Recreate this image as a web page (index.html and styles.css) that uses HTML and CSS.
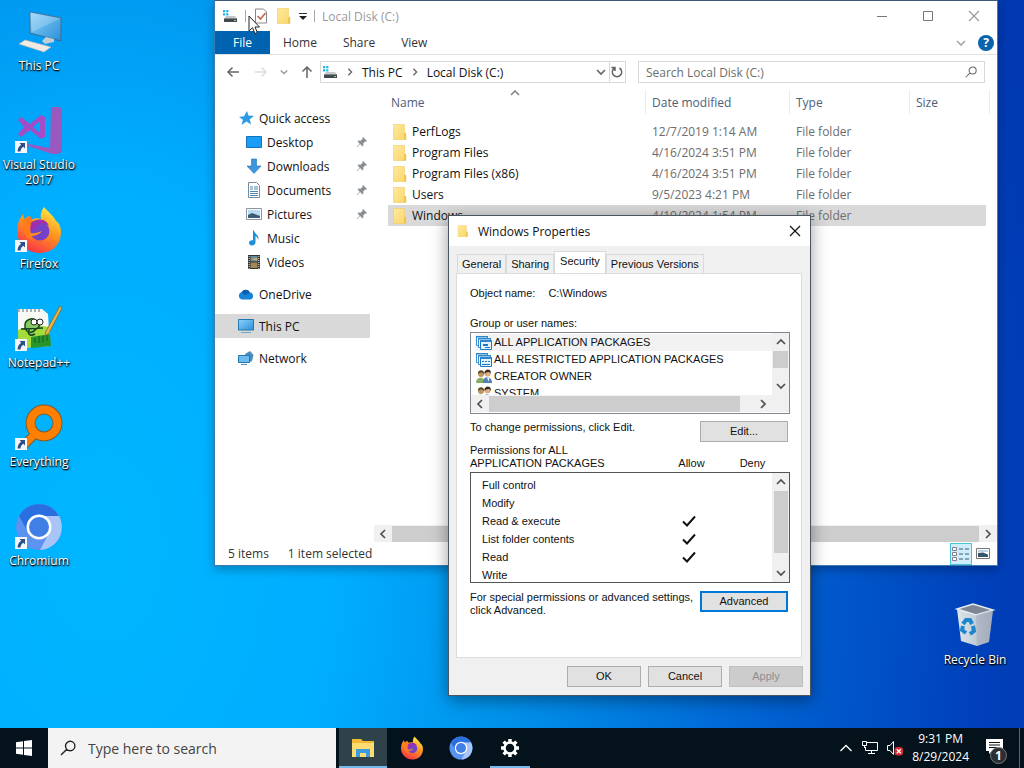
FILE: index.html
```html
<!DOCTYPE html>
<html lang="en">
<head>
  <meta charset="UTF-8">
  <title>Desktop</title>
  <meta name="viewport" content="width=device-width, initial-scale=1.0">
  <link rel="stylesheet" href="styles.css">
</head>
<body>

<!-- Shared icons -->
<svg class="defs" aria-hidden="true">
  <defs>
    <linearGradient id="gScreen" x1="0" y1="0" x2="1" y2="1"><stop offset="0" stop-color="#8fd3fb"/><stop offset="1" stop-color="#2a8fd8"/></linearGradient>
    <linearGradient id="gFox" x1="0.8" y1="0" x2="0.3" y2="1"><stop offset="0" stop-color="#fff04a"/><stop offset="0.45" stop-color="#ff9a1c"/><stop offset="1" stop-color="#f8304a"/></linearGradient>
    <linearGradient id="gFolder" x1="0" y1="0" x2="1" y2="1"><stop offset="0" stop-color="#ffe9a0"/><stop offset="1" stop-color="#fbd667"/></linearGradient>
    <linearGradient id="gBin" x1="0" y1="0" x2="1" y2="0"><stop offset="0" stop-color="#dfe6ec"/><stop offset="1" stop-color="#a9b2c0"/></linearGradient>
  </defs>
  <symbol id="folder" viewBox="0 0 16 16">
    <path d="M1.500.5h11v8l1.500 1V15.500H1.500z" fill="url(#gFolder)" stroke="#eecb62" stroke-width="0.6"/>
    <path d="M12 9h2v6.500h-2z" fill="#efc652"/>
  </symbol>
  <symbol id="drive" viewBox="0 0 16 16">
    <path d="M1 2h2.200v2.200H1zM4.200 2h2.200v2.200H4.200zM1 5.200h2.200v2.200H1zM4.200 5.200h2.200v2.200H4.200z" fill="#22b5e6"/>
    <path d="M4 8h9l2 3H2z" fill="#c4c8cb"/><path d="M2 10.500h13V14H2z" fill="#43484c"/><path d="M12 12h2v1h-2z" fill="#7fe37f"/>
  </symbol>
  <symbol id="shortcut" viewBox="0 0 12 12">
    <path d="M0 0h12v12H0z" fill="#f5f7fa"/>
    <path d="M4.500 2H10v5.500L8.300 5.800C6.500 7 5.600 8.400 5.500 10.500H2.600C2.500 7.500 4 5.500 6.200 3.800z" fill="#2d4f8c"/>
  </symbol>
  <symbol id="pin" viewBox="0 0 12 12">
    <path d="M7 1l4 4-1 .8-.8-.2-2 2 .2 2-1 .8-2.300-2.300L1 11.300l-.4-.4 3-3.200L1.600 5.500l1-1 2 .2 2-2L6.300 1.800z" fill="#8a8f94"/>
  </symbol>
  <symbol id="monitor" viewBox="0 0 16 16">
    <path d="M.5 1.500h15v10.500H.5z" fill="url(#gScreen)" stroke="#2577ad"/><path d="M3 14.500h10" stroke="#6fa6c8"/>
  </symbol>
  <symbol id="firefox" viewBox="0 0 48 48">
    <path d="M29 1c3 4 9 8 12 14 5 3 6 11 4 18-3 9-11 14-20 14C12 47 2 37 2 25c0-5 1-9 4-14l2-3 1 5 5-3 2 4c4-2 7-2 10-1C25 9 26 5 29 1z" fill="url(#gFox)"/>
    <path d="M8 14l7-4 3 5 9 1-4 6-6 1c-2 4-1 9 2 12-7-2-11-8-11-14z" fill="#ff7a1a"/>
    <circle cx="25" cy="25" r="9.500" fill="#7442c9"/>
    <path d="M16 17c5-5 15-5 18 3-4-3-8-3-11-1l-2 4-6 1z" fill="#a02fae"/>
    <path d="M15 27c6 1 8-1 12-2-3 4-7 5-11 5z" fill="#ff911e"/>
  </symbol>
  <symbol id="chromium" viewBox="0 0 48 48">
    <circle cx="24" cy="24" r="23" fill="#5c93f0"/>
    <path d="M4 13A23 23 0 0 1 44 13H24L13 29z" fill="#2a6fe0"/>
    <path d="M24 13h20A23 23 0 0 1 25 47l9-17z" fill="#a9c5f8"/>
    <circle cx="24" cy="24" r="12.500" fill="#fff"/><circle cx="24" cy="24" r="10" fill="#3f7fe6"/>
  </symbol>
  <symbol id="people" viewBox="0 0 16 16">
    <circle cx="5" cy="5" r="3" fill="#b99660"/><path d="M2 5c-1-5 7-5 6 0-1-2-4-2-6 0z" fill="#5d4a25"/>
    <path d="M0 14c0-7 9-7 9 0z" fill="#86ad63"/>
    <circle cx="11.500" cy="4.500" r="3" fill="#ddae82"/><path d="M8.500 5c-1-6 8-6 6 0-1-3-4-2-6 0z" fill="#3e2a1d"/>
    <path d="M7 14c0-8 9-7 9 0z" fill="#4f7fb5"/><path d="M11 8.500l1.500 4 1-4z" fill="#fff"/>
  </symbol>
  <symbol id="package" viewBox="0 0 18 16">
    <path d="M1.500 1.500h11v9h-11z" fill="#fff" stroke="#3b8fce"/><path d="M3.500 3.500h12v9h-12z" fill="#fff" stroke="#3b8fce"/>
    <path d="M5.500 5.500h11v9h-11z" fill="#e3f1fb" stroke="#1979c4"/><path d="M1 1h12v1.500H1zM3 3h13v1.500H3zM5 5h12v2H5z" fill="#2c86cc"/>
  </symbol>
  <symbol id="tick" viewBox="0 0 14 12"><path d="M1 6.500l4 4L13 1.500" fill="none" stroke="#111" stroke-width="2"/></symbol>
  <symbol id="up" viewBox="0 0 10 10"><path d="M1 7l4-4 4 4" fill="none" stroke="currentColor" stroke-width="1.700"/></symbol>
  <symbol id="down" viewBox="0 0 10 10"><path d="M1 3l4 4 4-4" fill="none" stroke="currentColor" stroke-width="1.700"/></symbol>
  <symbol id="left" viewBox="0 0 10 10"><path d="M7 1L3 5l4 4" fill="none" stroke="currentColor" stroke-width="1.700"/></symbol>
  <symbol id="right" viewBox="0 0 10 10"><path d="M3 1l4 4-4 4" fill="none" stroke="currentColor" stroke-width="1.700"/></symbol>
  <symbol id="close" viewBox="0 0 12 12"><path d="M1 1l10 10M11 1L1 11" fill="none" stroke="currentColor" stroke-width="1.200"/></symbol>
  <symbol id="lens" viewBox="0 0 16 16"><path d="M6.800 9.200L1 15M5.500 6a4.700 4.700 0 1 1 9.400 0a4.700 4.700 0 1 1-9.400 0z" fill="none" stroke="currentColor" stroke-width="1.400"/></symbol>
</svg>

<main class="desktop">

  <div class="shortcuts">
    <a class="shortcut" href="#">
      <svg class="big" viewBox="0 0 48 48">
        <path d="M15 4l31 6v23L15 25z" fill="url(#gScreen)" stroke="#3d6c90"/>
        <path d="M15 4l31 6-29 14z" fill="#fff" opacity=".2"/>
        <path d="M31 29l8 2v3l-9 2-3-3z" fill="#c4ccd4"/>
        <path d="M4 36l6-4 26 7-7 5z" fill="#f0e9e4" stroke="#b9b6b2" stroke-width=".6"/>
      </svg>
      <span>This PC</span>
    </a>
    <a class="shortcut" href="#">
      <svg class="big" viewBox="0 0 48 48">
        <path d="M36 0h7q4 0 4 4v38q0 4-4 5h-6L13 39v-2l22 4z" fill="#9a59bf"/>
        <path d="M3 13l3-3 9 7L26 8l4 2v20l-4 2-11-9-9 7-3-3 6-7zM25 14l-7 6 7 6z" fill="#a44cc6" fill-rule="evenodd"/>
      </svg>
      <svg class="arrow"><use href="#shortcut"/></svg>
      <span>Visual Studio 2017</span>
    </a>
    <a class="shortcut" href="#">
      <svg class="big"><use href="#firefox"/></svg>
      <svg class="arrow"><use href="#shortcut"/></svg>
      <span>Firefox</span>
    </a>
    <a class="shortcut" href="#">
      <svg class="big" viewBox="0 0 48 48">
        <path d="M3 4h24l6 5 2 32-32 2z" fill="#f7faf5"/>
        <path d="M3 25c12-6 22-5 31-3l1 19-32 2z" fill="#a3dc3c"/><path d="M16 32l19-3 1 12-20 2z" fill="#27942c"/>
        <path d="M4 4v3M8 4v3M12 4v3M16 4v3M20 4v3M24 4v3" stroke="#667"/>
        <path d="M10 22c-1-8 8-10 11-6 4 0 5 6 0 8-4 5-10 4-11-2zM15 24c-4 4 0 8 5 5M6 24l22-1" fill="#89c964" stroke="#17451d" stroke-width="1.500"/>
        <circle cx="19" cy="17" r="3" fill="#fff" stroke="#222"/><circle cx="25" cy="17" r="3" fill="#fff" stroke="#222"/>
        <path d="M20 33v5M24 31v7M28 31v6M32 30v6" stroke="#145c1a"/>
        <path d="M45 1l2 2-13 25-4 3 1-5z" fill="#e9b341" stroke="#80602a" stroke-width=".7"/>
      </svg>
      <svg class="arrow"><use href="#shortcut"/></svg>
      <span>Notepad++</span>
    </a>
    <a class="shortcut" href="#">
      <svg class="big" viewBox="0 0 48 48">
        <path d="M19 31L8 42" stroke="#7d5a35" stroke-width="9"/>
        <circle cx="29" cy="19" r="13.500" fill="none" stroke="#7d5a35" stroke-width="10"/>
        <path d="M19 31L8 42" stroke="#ff8000" stroke-width="7"/>
        <circle cx="29" cy="19" r="13.500" fill="none" stroke="#ff8000" stroke-width="8"/>
      </svg>
      <svg class="arrow"><use href="#shortcut"/></svg>
      <span>Everything</span>
    </a>
    <a class="shortcut" href="#">
      <svg class="big"><use href="#chromium"/></svg>
      <svg class="arrow"><use href="#shortcut"/></svg>
      <span>Chromium</span>
    </a>
  </div>

  <a class="shortcut recycle" href="#">
    <svg class="big" viewBox="0 0 48 48">
      <path d="M6 7l16-5 20 6-4 32-12 4-16-5z" fill="url(#gBin)"/>
      <path d="M6 7l16-5 20 6-17 5z" fill="#7d8794" stroke="#e5ebf0" stroke-width="1.500"/>
      <path d="M25 13l17-5-4 32-12 4z" fill="#969eaf" opacity=".35"/>
      <path d="M12 22l3-4h4l2 4M22 24l1 5-4 3M15 31l-4-3 1-4" fill="none" stroke="#1b87cf" stroke-width="4"/>
    </svg>
    <span>Recycle Bin</span>
  </a>

  <!-- Explorer window -->
  <section class="window explorer">
    <header class="titlebar">
      <svg class="i16"><use href="#drive"/></svg>
      <i class="sep"></i>
      <button class="plain" aria-label="Properties"><svg class="i16" viewBox="0 0 16 16"><path d="M2.500 1h8l3 3v11h-11z" fill="#fff" stroke="#888"/><path d="M4.500 8l3 3 5-6" fill="none" stroke="#c06a4e" stroke-width="1.700"/></svg></button>
      <button class="plain" aria-label="New folder"><svg class="i16"><use href="#folder"/></svg></button>
      <button class="plain more" aria-label="Customize"><svg viewBox="0 0 8 8"><path d="M0 1.500h8" stroke="#333"/><path d="M0 4h8L4 8z" fill="#222"/></svg></button>
      <i class="sep"></i>
      <span class="caption">Local Disk (C:)</span>
      <button class="winbtn" aria-label="Minimize"><svg class="i12" viewBox="0 0 12 12"><path d="M1 6.500h10" stroke="#777"/></svg></button>
      <button class="winbtn" aria-label="Maximize"><svg class="i12" viewBox="0 0 12 12"><path d="M1.500 1.500h9v9h-9z" fill="none" stroke="#777"/></svg></button>
      <button class="winbtn" aria-label="Close"><svg class="i12"><use href="#close"/></svg></button>
    </header>

    <nav class="ribbon">
      <button class="tab file">File</button>
      <button class="tab">Home</button>
      <button class="tab">Share</button>
      <button class="tab">View</button>
      <button class="plain expand" aria-label="Expand ribbon"><svg class="i10"><use href="#down"/></svg></button>
      <button class="plain help" aria-label="Help">?</button>
    </nav>

    <div class="addressrow">
      <button class="plain" aria-label="Back"><svg class="i14" viewBox="0 0 14 14"><path d="M13 7H2M6.500 2.500L2 7l4.500 4.500" fill="none" stroke="#666" stroke-width="1.500"/></svg></button>
      <button class="plain" aria-label="Forward"><svg class="i14" viewBox="0 0 14 14"><path d="M1 7h11M7.500 2.500L12 7l-4.500 4.500" fill="none" stroke="#ddd" stroke-width="1.500"/></svg></button>
      <button class="plain recent" aria-label="Recent"><svg viewBox="0 0 10 10"><use href="#down"/></svg></button>
      <button class="plain" aria-label="Up"><svg class="i14" viewBox="0 0 14 14"><path d="M7 13V2M2.500 6.500L7 2l4.500 4.500" fill="none" stroke="#666" stroke-width="1.500"/></svg></button>
      <div class="address">
        <svg class="i16"><use href="#drive"/></svg>
        <svg class="i8"><use href="#right"/></svg>
        <a href="#">This PC</a>
        <svg class="i8"><use href="#right"/></svg>
        <a href="#">Local Disk (C:)</a>
        <button class="plain drop" aria-label="History"><svg class="i10"><use href="#down"/></svg></button>
        <button class="plain refresh" aria-label="Refresh"><svg class="i12" viewBox="0 0 12 12"><path d="M8.500 2A4.700 4.700 0 1 1 3.500 2M4 5V1.500H.5" fill="none" stroke="#666" stroke-width="1.500"/></svg></button>
      </div>
      <label class="search">
        <input type="text" placeholder="Search Local Disk (C:)" aria-label="Search Local Disk (C:)">
        <svg class="i12"><use href="#lens"/></svg>
      </label>
    </div>

    <div class="body">
      <nav class="tree">
        <a class="root" href="#"><svg class="i16" viewBox="0 0 16 16"><path d="M9 1l1.500 4.500L16 6l-4.300 3.200L13 14.500 8.500 11.500 3.500 15l1.400-5.200L1 7l5-.8z" fill="#2b9be6"/></svg>Quick access</a>
        <a href="#"><svg class="i16" viewBox="0 0 16 16"><path d="M.5 2.500h15v11H.5z" fill="#1b9df5" stroke="#1273bd"/></svg>Desktop<svg class="pin"><use href="#pin"/></svg></a>
        <a href="#"><svg class="i16" viewBox="0 0 16 16"><path d="M5.500 1h5v7H15l-7 7.500L1 8h4.500z" fill="#3a96dd" stroke="#2374b5" stroke-width=".6"/></svg>Downloads<svg class="pin"><use href="#pin"/></svg></a>
        <a href="#"><svg class="i16" viewBox="0 0 16 16"><path d="M2.500.5h8l3 3v12h-11z" fill="#fff" stroke="#7b8a96"/><path d="M4 5h3M4 7h3M8 5h4M8 7h4M4 9.500h8M4 11.500h8M4 13.500h8" stroke="#4c87b4"/></svg>Documents<svg class="pin"><use href="#pin"/></svg></a>
        <a href="#"><svg class="i16" viewBox="0 0 16 16"><path d="M.5 2.500h15v11H.5z" fill="#fff" stroke="#8b969e"/><path d="M2 4h12v8H2z" fill="#b9dcf2"/><path d="M2 9l4-2 8 3v2H2z" fill="#3d5c76"/></svg>Pictures<svg class="pin"><use href="#pin"/></svg></a>
        <a href="#"><svg class="i16" viewBox="0 0 16 16"><path d="M8 .5c1 4 5 4 4.500 9-1-2-2-3-3-3.200V12c0 2-1.500 3.500-3.500 3.500S3 14 3 12.800c0-2 2-3 4-2.500V.5z" fill="#1b8fd8"/></svg>Music</a>
        <a href="#"><svg class="i16" viewBox="0 0 16 16"><path d="M2 1h12v14H2z" fill="#333"/><path d="M4.500 2h7v5.500h-7z" fill="#6b8a9c"/><path d="M4.500 8.500h7V14h-7z" fill="#a38a52"/><path d="M4.500 5l7-1v2.500z" fill="#d5b667"/><path d="M3.200 2v13M12.800 2v13" stroke="#ddd" stroke-dasharray="1 1"/></svg>Videos</a>
        <a class="root gap" href="#"><svg class="i16" viewBox="0 0 16 16"><path d="M4 13.500a3.700 3.700 0 0 1-.5-7.200A4.700 4.700 0 0 1 12 6.500a3.600 3.600 0 0 1 .5 7z" fill="#1583d8"/><path d="M3.500 6.300A4.700 4.700 0 0 1 12 6.500L7 9z" fill="#0a5ea8"/></svg>OneDrive</a>
        <a class="root gap active" href="#"><svg class="i16"><use href="#monitor"/></svg>This PC</a>
        <a class="root gap" href="#"><svg class="i16" viewBox="0 0 16 16"><path d="M7 4l5-3 3.500 4-1.500 6-4 2z" fill="#4a8dbd"/><path d="M.5 5.500h11v7H.5z" fill="#6dbcf0" stroke="#2577ad"/><path d="M3 14.500h6" stroke="#4f92bd"/></svg>Network</a>
      </nav>

      <div class="files">
        <svg class="sort i10"><use href="#up"/></svg>
        <table>
          <colgroup><col><col class="c-date"><col class="c-type"><col class="c-size"></colgroup>
          <thead>
            <tr><th>Name</th><th>Date modified</th><th>Type</th><th>Size</th></tr>
          </thead>
          <tbody>
            <tr><td><svg class="i16"><use href="#folder"/></svg>PerfLogs</td><td>12/7/2019 1:14 AM</td><td>File folder</td><td></td></tr>
            <tr><td><svg class="i16"><use href="#folder"/></svg>Program Files</td><td>4/16/2024 3:51 PM</td><td>File folder</td><td></td></tr>
            <tr><td><svg class="i16"><use href="#folder"/></svg>Program Files (x86)</td><td>4/16/2024 3:51 PM</td><td>File folder</td><td></td></tr>
            <tr><td><svg class="i16"><use href="#folder"/></svg>Users</td><td>9/5/2023 4:21 PM</td><td>File folder</td><td></td></tr>
            <tr class="selected"><td><svg class="i16"><use href="#folder"/></svg>Windows</td><td>4/10/2024 1:54 PM</td><td>File folder</td><td></td></tr>
          </tbody>
        </table>
        <div class="hscroll">
          <svg class="i10"><use href="#left"/></svg><i class="thumb"></i><svg class="i10"><use href="#right"/></svg>
        </div>
      </div>
    </div>

    <footer class="status">
      <span>5 items</span>
      <span>1 item selected</span>
      <button class="plain view on" aria-label="Details"><svg viewBox="0 0 18 16"><path d="M.5 1.500h4v3h-4zM.5 6.500h4v3h-4zM.5 11.500h4v3h-4z" fill="#fff" stroke="#8a7a90"/><path d="M7 3h4M13 3h4M7 8h4M13 8h4M7 13h4M13 13h4" stroke="#456"/></svg></button>
      <button class="plain view" aria-label="Large icons"><svg viewBox="0 0 18 16"><path d="M2.500 2.500h13v10h-13z" fill="#fff" stroke="#777"/><path d="M4 4h10v2H4z" fill="#b6d5ea"/><path d="M4 7l5-.5 5 2V11H4z" fill="#36566d"/></svg></button>
    </footer>
  </section>

  <!-- Properties dialog -->
  <section class="window dialog" role="dialog" aria-label="Windows Properties">
    <header class="titlebar">
      <svg class="i12"><use href="#folder"/></svg>
      <span class="caption">Windows Properties</span>
      <button class="winbtn" aria-label="Close"><svg class="i12"><use href="#close"/></svg></button>
    </header>

    <div class="tabs" role="tablist">
      <button role="tab">General</button>
      <button role="tab">Sharing</button>
      <button role="tab" class="current">Security</button>
      <button role="tab">Previous Versions</button>
    </div>

    <div class="panel">
      <div class="object"><span>Object name:</span><span>C:\Windows</span></div>

      <div class="grouplabel" id="groupLabel">Group or user names:</div>
      <div class="listbox groups">
        <ul aria-labelledby="groupLabel">
          <li class="current"><svg viewBox="0 0 18 16"><use href="#package"/><path d="M8 9h5v2H8zM10 12h5v1h-5z" fill="#1979c4"/></svg>ALL APPLICATION PACKAGES</li>
          <li><svg viewBox="0 0 18 16"><use href="#package"/><path d="M7 9h2v1H7zM10 9h2v1h-2zM13 9h2v1h-2zM7 12h8v1H7z" fill="#1979c4"/></svg>ALL RESTRICTED APPLICATION PACKAGES</li>
          <li><svg><use href="#people"/></svg>CREATOR OWNER</li>
          <li><svg><use href="#people"/></svg>SYSTEM</li>
        </ul>
        <div class="vscroll"><svg class="i10"><use href="#up"/></svg><i class="thumb"></i><svg class="i10"><use href="#down"/></svg></div>
        <div class="hscroll"><svg class="i10"><use href="#left"/></svg><i class="thumb"></i><svg class="i10"><use href="#right"/></svg></div>
      </div>

      <div class="row edit">
        <span>To change permissions, click Edit.</span>
        <button class="btn">Edit...</button>
      </div>

      <div class="permhead">
        <span id="permLabel">Permissions for ALL<br>APPLICATION PACKAGES</span>
        <span class="col">Allow</span>
        <span class="col">Deny</span>
      </div>
      <div class="listbox perms">
        <table aria-labelledby="permLabel">
          <tr><td>Full control</td><td></td><td></td></tr>
          <tr><td>Modify</td><td></td><td></td></tr>
          <tr><td>Read &amp; execute</td><td><svg><use href="#tick"/></svg></td><td></td></tr>
          <tr><td>List folder contents</td><td><svg><use href="#tick"/></svg></td><td></td></tr>
          <tr><td>Read</td><td><svg><use href="#tick"/></svg></td><td></td></tr>
          <tr><td>Write</td><td></td><td></td></tr>
        </table>
        <div class="vscroll"><svg class="i10"><use href="#up"/></svg><i class="thumb"></i><svg class="i10"><use href="#down"/></svg></div>
      </div>

      <div class="row special">
        <span>For special permissions or advanced settings,<br>click Advanced.</span>
        <button class="btn focus">Advanced</button>
      </div>
    </div>

    <div class="actions">
      <button class="btn">OK</button>
      <button class="btn">Cancel</button>
      <button class="btn" disabled>Apply</button>
    </div>
  </section>

  <svg class="cursor" viewBox="0 0 12 20"><path d="M1 1v15l3.500-3.300L7 18.500l2.300-1L7 12h4.500z" fill="#fff" stroke="#222"/></svg>
</main>

<footer class="taskbar">
  <button class="task" aria-label="Start"><svg class="i16" viewBox="0 0 16 16"><path d="M0 2.200l7-1v6.300H0zM8 1.100L16 0v7.500H8zM0 8.500h7v6.300l-7-1zM8 8.500h8V16l-8-1.100z" fill="#fff"/></svg></button>
  <label class="tasksearch">
    <svg class="i16"><use href="#lens"/></svg>
    <input type="text" placeholder="Type here to search" aria-label="Type here to search">
  </label>
  <div class="apps">
    <button class="task open on" aria-label="File Explorer"><svg viewBox="0 0 24 24"><path d="M1 3h9l2 2h11v16H1z" fill="#f3b935"/><path d="M1 7h22v14H1z" fill="#ffdc70"/><path d="M5 13h14v8h-4v-4H9v4H5z" fill="#3c9be0"/></svg></button>
    <button class="task" aria-label="Firefox"><svg><use href="#firefox"/></svg></button>
    <button class="task" aria-label="Chromium"><svg><use href="#chromium"/></svg></button>
    <button class="task open slim" aria-label="Settings"><svg viewBox="0 0 24 24"><circle cx="12" cy="12" r="5.500" fill="none" stroke="#fff" stroke-width="2.500"/><path d="M12 3v3M12 18v3M3 12h3M18 12h3M5.600 5.600l2.200 2.200M16.200 16.200l2.200 2.200M5.600 18.400l2.200-2.200M16.200 7.800l2.200-2.200" stroke="#fff" stroke-width="3.400"/></svg></button>
  </div>
  <div class="tray">
    <button class="plain" aria-label="Show hidden icons"><svg class="i14" viewBox="0 0 14 14"><path d="M1.500 10L7 4.500l5.500 5.500" fill="none" stroke="#fff" stroke-width="1.300"/></svg></button>
    <button class="plain" aria-label="Network"><svg class="i16" viewBox="0 0 16 16"><path d="M5 2.500h10.500v8H3.500V7M9.500 10.500v3M6 13.500h7M.5 1.500h4v4h-4zM2.500 5.500v2.500" fill="none" stroke="#fff"/></svg></button>
    <button class="plain" aria-label="Volume"><svg class="i16" viewBox="0 0 16 16"><path d="M.5 5.500h2.500l3.500-4v13L3 10.500H.5z" fill="none" stroke="#fff"/><rect x="7.500" y="7" width="8.500" height="8.500" rx="3" fill="#d92b35"/><path d="M9.800 9.300l4 4M13.800 9.300l-4 4" stroke="#fff" stroke-width="1.300"/></svg></button>
    <div class="clock">9:31 PM<br>8/29/2024</div>
    <button class="plain notes" aria-label="Notifications"><svg viewBox="0 0 24 24"><path d="M3 3h17v12H9l-3 3v-3H3z" fill="#fff"/><path d="M6 6.500h11M6 9h11M6 11.500h8" stroke="#111"/></svg><b>1</b></button>
  </div>
</footer>

</body>
</html>
```

FILE: styles.css
```css
* {
  box-sizing: border-box;
}

body {
  margin: 0;
  height: 100vh;
  display: flex;
  flex-direction: column;
  overflow: hidden;
  font-family: "Open Sans", "Noto Sans", sans-serif;
  font-size: 12px;
  color: #111;
}

button, input {
  font: inherit;
  color: inherit;
}

a {
  color: inherit;
  text-decoration: none;
}

svg {
  display: block;
  flex: none;
}

.defs {
  position: absolute;
  width: 0;
  height: 0;
}

.i8 { width: 8px; height: 8px; }
.i10 { width: 10px; height: 10px; }
.i12 { width: 12px; height: 12px; }
.i14 { width: 14px; height: 14px; }
.i16 { width: 16px; height: 16px; }

.plain {
  display: flex;
  align-items: center;
  justify-content: center;
  padding: 0;
  border: none;
  background: none;
}

/* Desktop */
.desktop {
  flex: 1;
  position: relative;
  min-height: 0;
  background: radial-gradient(ellipse 960px 1500px at 10% 75%, #00b6ff 0%, #00aeff 24%, #0090ea 44%, #0062d2 70%, #0040ba 92%, #0039b2 100%);
}

.shortcuts {
  display: grid;
  grid-auto-rows: 99px;
  width: 76px;
  padding: 8px 0 0 2px;
}

.shortcut {
  position: relative;
  display: flex;
  flex-direction: column;
  align-items: center;
  gap: 2px;
  width: 74px;
  color: #fff;
  line-height: 15px;
  text-align: center;
  text-shadow: 1px 1px 2px #000, 0 1px 1px #000;
}

.shortcut .big {
  width: 48px;
  height: 48px;
}

.shortcut .arrow {
  position: absolute;
  left: 13px;
  top: 34px;
  width: 12px;
  height: 12px;
}

.recycle {
  position: absolute;
  right: 12px;
  bottom: 61px;
}

/* Windows */
.window {
  position: absolute;
  display: flex;
  flex-direction: column;
}

.titlebar {
  display: flex;
  align-items: center;
  height: 30px;
  background: #fff;
}

.caption {
  flex: 1;
}

.winbtn {
  display: flex;
  align-items: center;
  justify-content: center;
  width: 46px;
  height: 29px;
  padding: 0;
  border: none;
  background: none;
}

.explorer {
  left: 214px;
  right: 26px;
  top: 0;
  height: 566px;
  background: #fff;
  border: 1px solid #3c7cb4;
  border-top-color: #3d5878;
  box-shadow: 0 3px 10px rgba(0, 0, 0, 0.3);
}

.explorer .titlebar {
  gap: 7px;
  padding-left: 7px;
  color: #999;
}

.explorer .winbtn {
  margin-left: -7px;
}

.explorer .winbtn:first-of-type {
  margin-left: 0;
}

.sep {
  width: 1px;
  height: 12px;
  background: #aaa;
}

.more svg {
  width: 8px;
  height: 8px;
}

.ribbon {
  display: flex;
  align-items: center;
  height: 24px;
  border-bottom: 1px solid #e2e2e2;
}

.tab {
  height: 23px;
  padding: 0 13px;
  border: none;
  background: none;
  color: #333;
}

.tab.file {
  width: 55px;
  background: #0063b1;
  color: #fff;
}

.expand {
  margin-left: auto;
  color: #aaa;
}

.help {
  width: 16px;
  height: 16px;
  margin: 0 3px 0 12px;
  border-radius: 50%;
  background: #0a63ad;
  color: #fff;
  font-weight: bold;
}

.addressrow {
  display: flex;
  align-items: center;
  gap: 12px;
  padding: 6px 12px 0 10px;
  color: #666;
}

.addressrow .plain {
  width: 16px;
}

.addressrow .recent {
  width: 8px;
  margin: 0 -1px;
  color: #999;
}

.recent svg {
  width: 8px;
  height: 8px;
}

.address,
.search {
  display: flex;
  align-items: center;
  height: 22px;
  border: 1px solid #d9d9d9;
}

.address {
  flex: 313;
  gap: 8px;
  margin-left: -7px;
  padding-left: 1px;
}

.address a {
  color: #111;
}

.address .drop {
  margin-left: auto;
}

.address .refresh {
  margin-left: -8px;
  height: 20px;
  border-left: 1px solid #d9d9d9;
}

.search {
  flex: 342;
  padding: 0 7px;
}

.search input {
  flex: 1;
  min-width: 0;
  padding: 0;
  border: none;
  outline: none;
  background: none;
}

.search input::placeholder {
  color: #6d6d6d;
}

.body {
  flex: 1;
  display: grid;
  grid-template-columns: 155px 1fr;
  min-height: 0;
  padding-top: 7px;
}

.tree {
  padding-top: 16px;
}

.tree a {
  display: flex;
  align-items: center;
  gap: 5px;
  height: 24px;
  padding: 0 2px 0 31px;
}

.tree .root {
  padding-left: 23px;
}

.tree .gap {
  margin-top: 8px;
}

.tree .active {
  background: #d9d9d9;
}

.tree .pin {
  width: 12px;
  height: 12px;
  margin-left: auto;
}

.files {
  position: relative;
  display: flex;
  flex-direction: column;
  padding-left: 4px;
}

.sort {
  position: absolute;
  left: 140px;
  top: -2px;
  color: #888;
}

.files table {
  table-layout: fixed;
  width: calc(100% - 21px);
  margin-left: 14px;
  border-collapse: separate;
  border-spacing: 0;
}

.c-date { width: 144px; }
.c-type { width: 120px; }
.c-size { width: 80px; }

.files th {
  height: 24px;
  padding: 0 0 0 6px;
  border-right: 1px solid #ececec;
  text-align: left;
  font-weight: normal;
  color: #4c607a;
}

.files th:first-child {
  padding-left: 3px;
}

.files tbody::before {
  content: "";
  display: block;
  height: 7px;
}

.files td {
  height: 21px;
  padding: 0 0 0 6px;
  color: #6d6d6d;
  white-space: nowrap;
}

.files td:first-child {
  padding-left: 4px;
  color: #111;
}

.files td svg {
  display: inline-block;
  margin-right: 4px;
  vertical-align: middle;
}

.files .selected td {
  background: #d9d9d9;
}

.files .selected td:last-child {
  border-right: 4px solid #fff;
}

.hscroll {
  display: flex;
  align-items: center;
  height: 17px;
  background: #f0f0f0;
  color: #505050;
}

.vscroll {
  display: flex;
  flex-direction: column;
  align-items: center;
  width: 17px;
  background: #f0f0f0;
  color: #505050;
}

.thumb {
  background: #cdcdcd;
}

.hscroll svg { margin: 0 4px; }
.vscroll svg { margin: 4px 0; }

.files .hscroll {
  margin-top: auto;
}

.files .thumb {
  flex: 1;
  height: 16px;
}

.status {
  display: flex;
  align-items: center;
  height: 23px;
  padding: 0 3px 0 13px;
  color: #333;
}

.status span {
  margin-right: 19px;
}

.view {
  width: 22px;
  height: 22px;
}

.view svg {
  width: 18px;
  height: 16px;
}

.view.on {
  margin-left: auto;
  border: 1px solid #4cc2d6;
  background: #cdeefa;
}

/* Properties dialog */
.dialog {
  left: 448px;
  top: 215px;
  width: 363px;
  background: #f0f0f0;
  border: 1px solid #4a5560;
  box-shadow: 0 4px 16px rgba(0, 0, 0, 0.4);
  font-family: "Liberation Sans", Arial, sans-serif;
  font-size: 11px;
  line-height: 13px;
}

.dialog .titlebar {
  gap: 9px;
  padding-left: 8px;
  font-family: "Open Sans", "Noto Sans", sans-serif;
  font-size: 12px;
}

.dialog .winbtn {
  width: 30px;
}

.tabs {
  display: flex;
  align-items: flex-end;
  height: 27px;
  padding: 0 8px;
}

.tabs button {
  height: 19px;
  padding: 0 4px;
  border: 1px solid #d9d9d9;
  border-bottom: none;
  background: #f0f0f0;
  line-height: 13px;
}

.tabs .current {
  height: 22px;
  padding: 0 5px 3px;
  background: #fff;
}

.panel {
  margin: 0 8px 0 7px;
  height: 385px;
  padding: 13px 11px 0 13px;
  border: 1px solid #dcdcdc;
  background: #fff;
}

.object {
  display: flex;
  gap: 13px;
  height: 14px;
}

.grouplabel {
  margin-top: 16px;
}

.listbox {
  display: grid;
  grid-template-columns: 1fr 17px;
  margin-top: 2px;
  border: 1px solid #828790;
}

.groups {
  grid-template-rows: 62px 17px;
  height: 82px;
}

.groups ul {
  margin: 0;
  padding: 1px 0 0 4px;
  overflow: hidden;
  list-style: none;
  line-height: 17px;
}

.groups li {
  display: flex;
  align-items: center;
  height: 17px;
  gap: 1px;
}

.groups .current {
  background: #f2f2f2;
}

.groups li svg {
  width: 18px;
  height: 16px;
}

.groups .vscroll .thumb {
  width: 15px;
  height: 17px;
  margin-bottom: auto;
}

.groups .hscroll {
  grid-column: 1 / 3;
  padding-right: 17px;
}

.groups .hscroll .thumb {
  width: 251px;
  height: 16px;
  margin-right: auto;
}

.row {
  display: flex;
  justify-content: space-between;
  padding-right: 2px;
}

.edit {
  margin-top: 7px;
}

.btn {
  width: 88px;
  height: 21px;
  padding: 0;
  border: 1px solid #adadad;
  background: #e1e1e1;
  line-height: 13px;
}

.btn.focus {
  border: 2px solid #0078d7;
}

.btn:disabled {
  border-color: #bfbfbf;
  background: #ccc;
  color: #8f8f8f;
}

.permhead {
  display: flex;
  align-items: flex-end;
  margin-top: 2px;
  padding-right: 7px;
}

.permhead .col {
  width: 61px;
  text-align: center;
}

.permhead span:first-child {
  flex: 1;
}

.perms {
  height: 111px;
  border-color: #555;
}

.perms table {
  width: 100%;
  align-self: start;
  margin-top: 3px;
  border-spacing: 0;
}

.perms td {
  height: 18px;
  padding: 0;
}

.perms td:first-child {
  padding-left: 11px;
}

.perms td + td {
  width: 61px;
}

.perms td + td + td {
  width: 53px;
}

.perms td svg {
  width: 14px;
  height: 12px;
  margin: 0 auto;
}

.perms .vscroll {
  height: 109px;
}

.perms .thumb {
  width: 14px;
  height: 62px;
  margin-bottom: auto;
}

.special {
  margin-top: 8px;
}

.actions {
  display: flex;
  justify-content: flex-end;
  gap: 7px;
  padding: 8px 7px;
}

.actions .btn {
  width: 74px;
}

.cursor {
  position: absolute;
  left: 248px;
  top: 15px;
  width: 12px;
  height: 20px;
}

/* Taskbar */
.taskbar {
  display: flex;
  height: 40px;
  background: #03121b;
  color: #fff;
}

.task {
  display: flex;
  align-items: center;
  justify-content: center;
  width: 48px;
  padding: 0;
  border: none;
  background: none;
}

.apps {
  display: flex;
  gap: 1px;
  margin-left: 3px;
}

.apps svg {
  width: 24px;
  height: 24px;
}

.apps .open {
  border-top: 2px solid transparent;
  border-bottom: 2px solid #76b9ed;
}

.apps .on {
  background: #2f4149;
}

.apps .slim {
  width: 40px;
  margin: 0 4px;
}

.tasksearch {
  display: flex;
  align-items: center;
  gap: 12px;
  width: 288px;
  padding-left: 12px;
  background: #f3f3f3;
  color: #222;
}

.tasksearch input {
  flex: 1;
  min-width: 0;
  padding: 0;
  border: none;
  outline: none;
  background: none;
  font-size: 14px;
}

.tasksearch input::placeholder {
  color: #444;
}

.tray {
  display: flex;
  align-items: center;
  gap: 9px;
  margin-left: auto;
  margin-right: 4px;
  border-right: 1px solid #5a656c;
}

.clock {
  line-height: 18px;
  text-align: center;
}

.notes {
  position: relative;
  width: 41px;
  height: 40px;
  padding-right: 8px;
}

.notes svg {
  width: 24px;
  height: 24px;
}

.notes b {
  position: absolute;
  right: 12px;
  bottom: 4px;
  width: 17px;
  height: 17px;
  border: 1px solid #777;
  border-radius: 50%;
  background: #2b2f33;
  line-height: 15px;
}
```
